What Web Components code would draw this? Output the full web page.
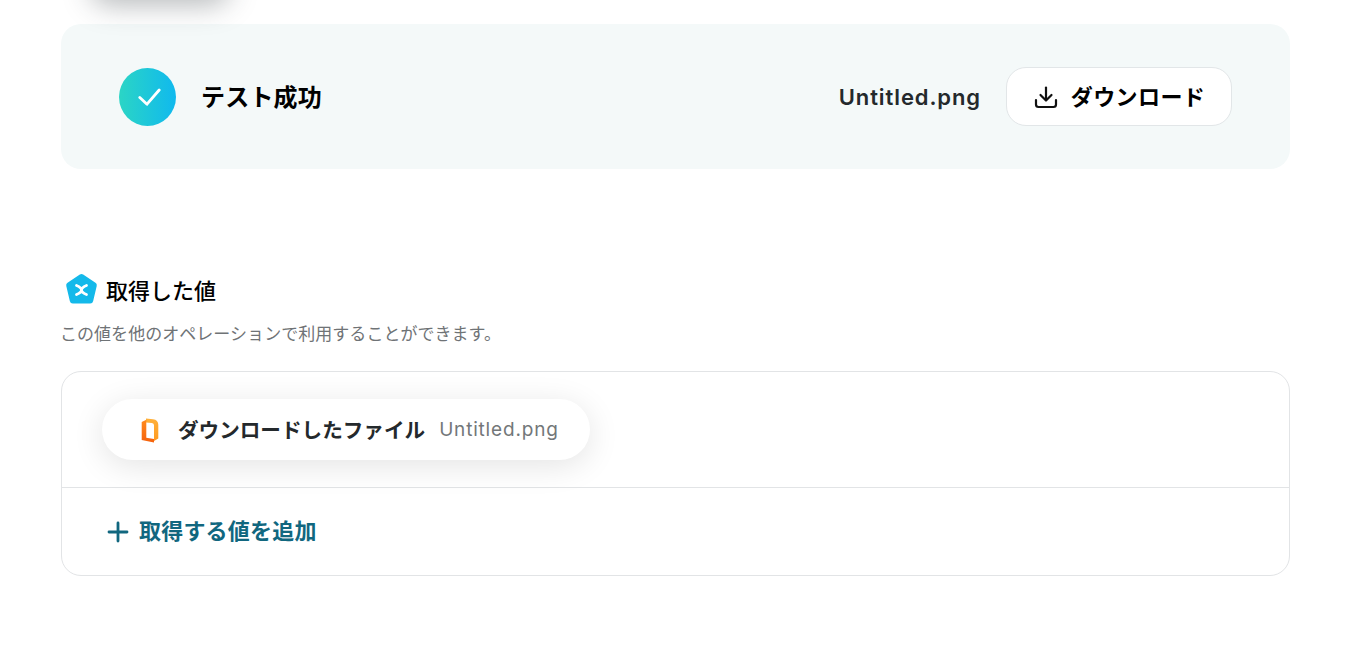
<!DOCTYPE html>
<html lang="ja">
<head>
<meta charset="utf-8">
<title>テスト成功</title>
<style>
    html, body {
        margin: 0;
        height: 646px;
        overflow: hidden;
        background: #ffffff;
        font-family: Inter, "Noto Sans CJK JP", sans-serif;
    }
</style>
</head>
<body>
<flow-page>
    <test-result slot="result" file="Untitled.png"></test-result>
    <value-section slot="values">
        <value-pill label="ダウンロードしたファイル" value="Untitled.png"></value-pill>
    </value-section>
</flow-page>

<script>
class FlowPage extends HTMLElement {
    constructor() {
        super();
        this.attachShadow({ mode: 'open' });
        this.shadowRoot.innerHTML = `
            <style>
                :host {
                    display: block;
                    position: relative;
                    height: 646px;
                    padding: 24px 60px 0 61px;
                    box-sizing: border-box;
                }
                /* shadow of the button scrolled away above the fold */
                .scrolled-shadow {
                    position: absolute;
                    left: 90px;
                    top: -40px;
                    width: 140px;
                    height: 40px;
                    border-radius: 20px;
                    box-shadow: 0 5px 28px rgba(40, 50, 55, 0.34);
                }
                .stack {
                    display: flex;
                    flex-direction: column;
                    gap: 102px;
                }
            </style>
            <div class="scrolled-shadow"></div>
            <div class="stack">
                <slot name="result"></slot>
                <slot name="values"></slot>
            </div>
        `;
    }
}

class TestResult extends HTMLElement {
    constructor() {
        super();
        this.attachShadow({ mode: 'open' });
    }

    connectedCallback() {
        const file = this.getAttribute('file') || '';
        this.shadowRoot.innerHTML = `
            <style>
                :host {
                    display: flex;
                    align-items: center;
                    height: 145px;
                    padding: 0 58px;
                    box-sizing: border-box;
                    background: #f4f9f9;
                    border-radius: 20px;
                }
                .check {
                    width: 57px;
                    height: 58px;
                    border-radius: 50%;
                    background: linear-gradient(90deg, #2bd5c5, #10b9ee);
                    display: flex;
                    justify-content: center;
                    align-items: center;
                }
                .title {
                    margin: 0 0 2px 25px;
                    font-size: 24px;
                    font-weight: 700;
                    letter-spacing: 0.2px;
                    color: #000;
                    flex: 1;
                }
                .file {
                    font-size: 22px;
                    font-weight: 600;
                    letter-spacing: 0.9px;
                    color: #24292c;
                    margin-right: 25px;
                }
                .download {
                    width: 226px;
                    height: 59px;
                    box-sizing: border-box;
                    background: #fff;
                    border: 1px solid #e2e6e8;
                    border-radius: 20px;
                    display: flex;
                    align-items: center;
                    justify-content: center;
                    gap: 12px;
                    font-size: 22px;
                    font-weight: 700;
                    color: #000;
                    letter-spacing: 0.4px;
                }
                .download span { margin-bottom: 4px; }
                svg { display: block; }
            </style>
            <div class="check">
                <svg width="26" height="26" viewBox="0 0 26 26" fill="none" stroke="#fff" stroke-width="2.8" stroke-linecap="round" stroke-linejoin="round">
                    <path d="M4.8 13.5 L12 20.2 L24.2 6"/>
                </svg>
            </div>
            <div class="title">テスト成功</div>
            <div class="file">${file}</div>
            <div class="download">
                <svg width="26" height="26" viewBox="0 0 26 26" fill="none" stroke="#111" stroke-width="2.2" stroke-linecap="round" stroke-linejoin="round">
                    <path d="M13 3.5 V16"/>
                    <path d="M7.5 11 L13 16.5 L18.5 11"/>
                    <path d="M3 16 V20.5 A2.5 2.5 0 0 0 5.5 23 H20.5 A2.5 2.5 0 0 0 23 20.5 V16"/>
                </svg>
                <span>ダウンロード</span>
            </div>
        `;
    }
}

class ValueSection extends HTMLElement {
    constructor() {
        super();
        this.attachShadow({ mode: 'open' });
        this.shadowRoot.innerHTML = `
            <style>
                :host { display: block; }
                .heading {
                    display: flex;
                    align-items: center;
                    gap: 8px;
                    height: 36px;
                    padding-left: 3px;
                    font-size: 22px;
                    font-weight: 500;
                    color: #000;
                }
                .note {
                    margin: 15px 0 0 -1px;
                    font-size: 17px;
                    line-height: 24px;
                    letter-spacing: 0.04px;
                    color: #6f7376;
                }
                .card {
                    margin-top: 25px;
                    height: 205px;
                    box-sizing: border-box;
                    border: 1px solid #e2e4e6;
                    border-radius: 20px;
                    display: flex;
                    flex-direction: column;
                }
                .values {
                    height: 116px;
                    box-sizing: border-box;
                    padding: 27px 40px 0;
                    border-bottom: 1px solid #e2e4e6;
                }
                .add {
                    flex: 1;
                    display: flex;
                    align-items: center;
                    gap: 9px;
                    padding: 0 0 0 44px;
                    font-size: 22px;
                    font-weight: 700;
                    letter-spacing: 0.2px;
                    color: #11677f;
                }
                .add span { margin-bottom: 5px; }
                svg { display: block; }
            </style>
            <div class="heading">
                <svg width="34" height="32" viewBox="0 0 34 32">
                    <path d="M17.5 4 L29.8 12.2 L26.2 27.5 H8.8 L5.2 12.2 Z" fill="#14b9ea" stroke="#14b9ea" stroke-width="6" stroke-linejoin="round"/>
                    <path d="M12.5 12.5 Q17.5 14.5 17.5 17 Q17.5 19.5 12.5 21.5 M22.5 12.5 Q17.5 14.5 17.5 17 Q17.5 19.5 22.5 21.5" fill="none" stroke="#fff" stroke-width="2.8" stroke-linecap="round"/>
                </svg>
                <span>取得した値</span>
            </div>
            <p class="note">この値を他のオペレーションで利用することができます。</p>
            <div class="card">
                <div class="values"><slot></slot></div>
                <div class="add">
                    <svg width="24" height="24" viewBox="0 0 24 24" fill="none" stroke="#11677f" stroke-width="2.8" stroke-linecap="round">
                        <path d="M12 3 V21 M3 12 H21"/>
                    </svg>
                    <span>取得する値を追加</span>
                </div>
            </div>
        `;
    }
}

class ValuePill extends HTMLElement {
    constructor() {
        super();
        this.attachShadow({ mode: 'open' });
    }

    connectedCallback() {
        const label = this.getAttribute('label') || '';
        const value = this.getAttribute('value') || '';
        this.shadowRoot.innerHTML = `
            <style>
                :host {
                    display: inline-flex;
                    align-items: center;
                    height: 61px;
                    width: 488px;
                    box-sizing: border-box;
                    padding-left: 37px;
                    background: #fff;
                    border-radius: 31px;
                    box-shadow: 0 6px 32px rgba(0, 0, 0, 0.11);
                }
                .label {
                    margin: 0 0 2px 18px;
                    font-size: 20.6px;
                    font-weight: 700;
                    color: #24292c;
                    white-space: nowrap;
                }
                .value {
                    margin-left: 14px;
                    font-size: 19px;
                    letter-spacing: 0.82px;
                    color: #737779;
                }
                svg { display: block; }
            </style>
            <svg width="21" height="26" viewBox="0 0 21 26">
                <defs>
                    <linearGradient id="back" x1="0" y1="0" x2="0" y2="1">
                        <stop offset="0" stop-color="#ffb13b"/>
                        <stop offset="1" stop-color="#ff9a1f"/>
                    </linearGradient>
                    <linearGradient id="front" x1="0" y1="0" x2="0" y2="1">
                        <stop offset="0" stop-color="#ff8a1c"/>
                        <stop offset="1" stop-color="#f5610c"/>
                    </linearGradient>
                </defs>
                <path d="M7 1.5 L14 2.2 Q19.3 2.9 19.3 7.8 V21.5 L15 24 V8.2 Q15 6.4 13 6.1 L7 5.4 Z" fill="url(#back)"/>
                <path d="M2.7 5 L7.3 2.8 V20.8 L15 21.9 V25.5 L2.7 23 Z" fill="url(#front)"/>
            </svg>
            <span class="label">${label}</span>
            <span class="value">${value}</span>
        `;
    }
}

customElements.define('flow-page', FlowPage);
customElements.define('test-result', TestResult);
customElements.define('value-section', ValueSection);
customElements.define('value-pill', ValuePill);
</script>
</body>
</html>
